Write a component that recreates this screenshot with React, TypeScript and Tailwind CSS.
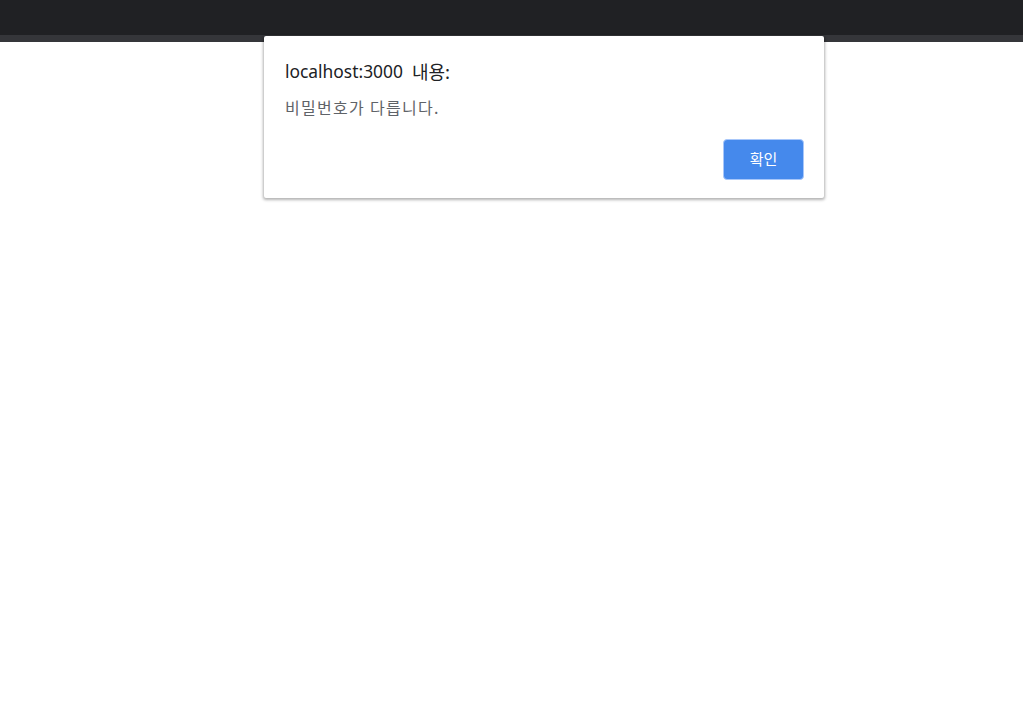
import React from "react";

export default function App() {
  return (
    <div className="relative h-[723px] w-[1023px] overflow-hidden bg-white" style={{ fontFamily: '"Segoe UI", "Noto Sans", "Noto Sans CJK KR", sans-serif' }}>
      <div className="h-[35px] bg-[#202124]" />
      <div className="h-[7px] bg-[#35363a]" />
      <div className="absolute left-[264px] top-[36px] h-[162px] w-[560px] rounded-[2px] bg-white shadow-[0_1px_3px_1px_rgba(0,0,0,0.3)] pl-[21px] pr-[20px] pt-[22px]">
        <div className="flex items-center h-[26px] text-[#202124]">
          <span className="text-[17.4px] font-normal">localhost:3000</span>
          <span className="ml-[9px] text-[18px]" style={{ fontFamily: '"Noto Sans CJK KR", sans-serif' }}>내용:</span>
        </div>
        <div className="mt-[13px] h-[20px] leading-[20px] text-[16px] tracking-[1.3px] text-[#5f6368]" style={{ fontFamily: '"Noto Sans CJK KR", sans-serif' }}>비밀번호가 다릅니다.</div>
        <div className="mt-[22px] flex justify-end">
          <button className="h-[41px] w-[81px] rounded-[4px] border border-[#a8c7fa] bg-[#4589ec] text-[15px] text-white" style={{ fontFamily: '"Noto Sans CJK KR", sans-serif' }}>확인</button>
        </div>
      </div>
    </div>
  );
}
